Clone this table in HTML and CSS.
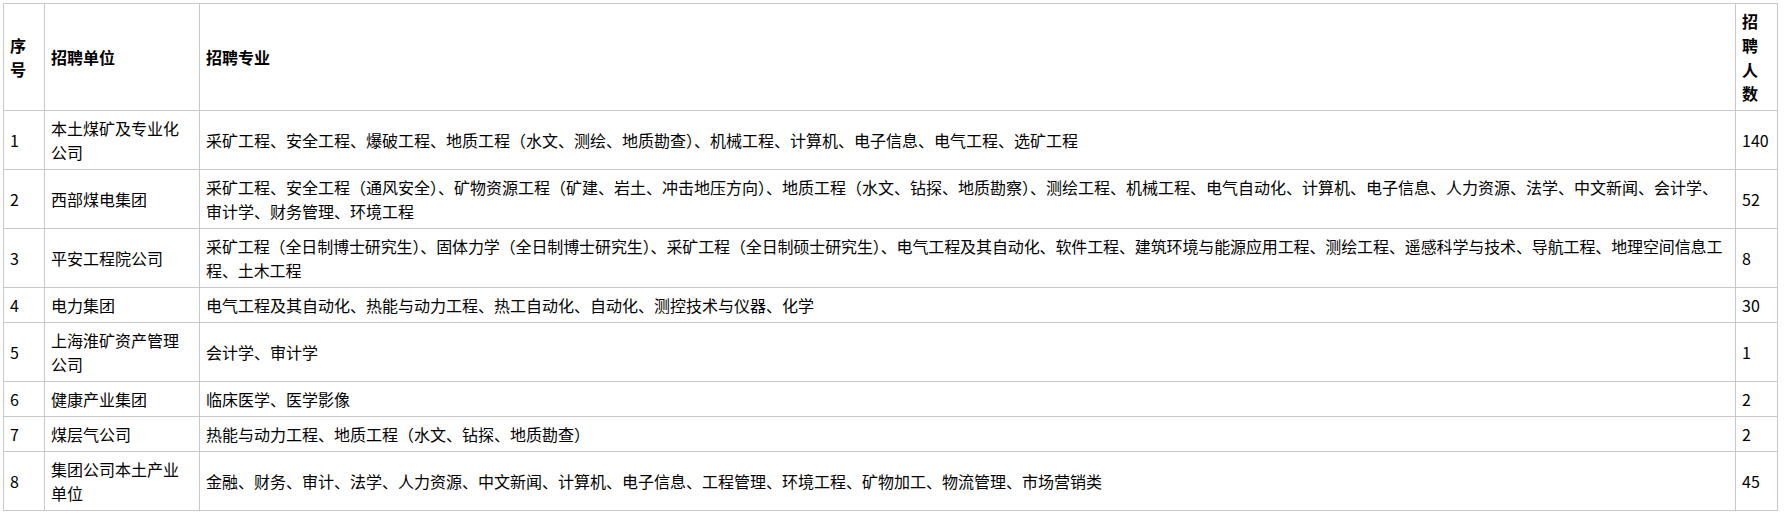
FILE: index.html
```html
<!DOCTYPE html>
<html lang="zh-CN">
<head>
<meta charset="utf-8">
<title>招聘计划</title>
<link rel="stylesheet" href="styles.css">
</head>
<body>
<table class="recruit">
  <colgroup>
    <col class="c-no">
    <col class="c-unit">
    <col class="c-major">
    <col class="c-count">
  </colgroup>
  <thead>
    <tr>
      <th>序号</th>
      <th>招聘单位</th>
      <th>招聘专业</th>
      <th>招聘人数</th>
    </tr>
  </thead>
  <tbody>
    <tr>
      <td>1</td>
      <td>本土煤矿及专业化公司</td>
      <td>采矿工程、安全工程、爆破工程、地质工程（水文、测绘、地质勘查）、机械工程、计算机、电子信息、电气工程、选矿工程</td>
      <td>140</td>
    </tr>
    <tr>
      <td>2</td>
      <td>西部煤电集团</td>
      <td>采矿工程、安全工程（通风安全）、矿物资源工程（矿建、岩土、冲击地压方向）、地质工程（水文、钻探、地质勘察）、测绘工程、机械工程、电气自动化、计算机、电子信息、人力资源、法学、中文新闻、会计学、审计学、财务管理、环境工程</td>
      <td>52</td>
    </tr>
    <tr>
      <td>3</td>
      <td>平安工程院公司</td>
      <td class="tight">采矿工程（全日制博士研究生）、固体力学（全日制博士研究生）、采矿工程（全日制硕士研究生）、电气工程及其自动化、软件工程、建筑环境与能源应用工程、测绘工程、遥感科学与技术、导航工程、地理空间信息工程、土木工程</td>
      <td>8</td>
    </tr>
    <tr>
      <td>4</td>
      <td>电力集团</td>
      <td>电气工程及其自动化、热能与动力工程、热工自动化、自动化、测控技术与仪器、化学</td>
      <td>30</td>
    </tr>
    <tr>
      <td>5</td>
      <td>上海淮矿资产管理公司</td>
      <td>会计学、审计学</td>
      <td>1</td>
    </tr>
    <tr>
      <td>6</td>
      <td>健康产业集团</td>
      <td>临床医学、医学影像</td>
      <td>2</td>
    </tr>
    <tr>
      <td>7</td>
      <td>煤层气公司</td>
      <td>热能与动力工程、地质工程（水文、钻探、地质勘查）</td>
      <td>2</td>
    </tr>
    <tr>
      <td>8</td>
      <td>集团公司本土产业单位</td>
      <td>金融、财务、审计、法学、人力资源、中文新闻、计算机、电子信息、工程管理、环境工程、矿物加工、物流管理、市场营销类</td>
      <td>45</td>
    </tr>
  </tbody>
</table>
</body>
</html>
```

FILE: styles.css
```css
html, body {
  background: #ffffff;
}
body {
  margin: 3px 0 0 3px;
  font-family: "Noto Sans CJK SC", "Noto Sans", sans-serif;
  font-size: 16px;
  color: #000000;
}
.recruit {
  border-collapse: collapse;
  table-layout: fixed;
  width: 1774px;
}
.c-no { width: 41px; }
.c-unit { width: 155px; }
.c-major { width: 1536px; }
.c-count { width: 42px; }
.recruit th,
.recruit td {
  border: 1px solid #c8c8c8;
  padding: 5px 6px;
  line-height: 24px;
  text-align: left;
  vertical-align: middle;
  word-break: break-all;
}
.recruit th {
  font-weight: bold;
}
.recruit td.tight {
  letter-spacing: -0.12px;
}
```
